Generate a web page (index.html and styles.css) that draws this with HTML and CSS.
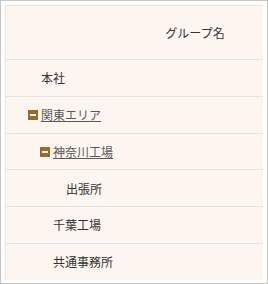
FILE: index.html
```html
<!DOCTYPE html>
<html lang="ja">
<head>
    <meta charset="UTF-8">
    <title>グループ</title>
    <link rel="stylesheet" href="styles.css">
</head>
<body>
    <div class="frame">
        <div class="scroller">
            <table class="group-table">
                <thead>
                    <tr><th>グループ名</th></tr>
                </thead>
                <tbody>
                    <tr><td class="lv0"><span class="name">本社</span></td></tr>
                    <tr><td class="lv0"><span class="name"><span class="toggle"></span><a href="#">関東エリア</a></span></td></tr>
                    <tr><td class="lv1"><span class="name"><span class="toggle"></span><a href="#">神奈川工場</a></span></td></tr>
                    <tr><td class="lv2"><span class="name">出張所</span></td></tr>
                    <tr><td class="lv1"><span class="name">千葉工場</span></td></tr>
                    <tr><td class="lv1"><span class="name">共通事務所</span></td></tr>
                    <tr><td class="lv1"><span class="name">&nbsp;</span></td></tr>
                </tbody>
            </table>
        </div>
    </div>
</body>
</html>
```

FILE: styles.css
```css
html, body {
    margin: 0;
    padding: 0;
    background: #ffffff;
}
body {
    font-family: "Noto Sans CJK JP", "Noto Sans", sans-serif;
    font-size: 12px;
    color: #333333;
}
.frame {
    box-sizing: border-box;
    width: 268px;
    height: 284px;
    border: 1px solid #c6c6c6;
    padding: 4px;
}
.scroller {
    height: 275px;
    overflow: hidden;
}
.group-table {
    width: 380px;
    border-collapse: collapse;
    background: #fdf5ef;
    border: 1px solid #e3e3e3;
}
.group-table th {
    height: 53px;
    padding: 0;
    font-weight: normal;
    text-align: center;
    border-bottom: 1px solid #e3e3e3;
}
.group-table td {
    height: 35.75px;
    padding: 0;
    text-align: left;
    border-bottom: 1px solid #e3e3e3;
}
.lv0 { padding-left: 35px !important; }
.lv1 { padding-left: 47px !important; }
.lv2 { padding-left: 60px !important; }
.name {
    display: inline-flex;
    align-items: center;
}
.name a {
    color: #5a5a5a;
    text-decoration: underline;
}
.toggle {
    position: relative;
    width: 10px;
    height: 10px;
    margin-left: -13px;
    margin-right: 3px;
    background: #9c6a28;
}
.toggle::after {
    content: "";
    position: absolute;
    left: 2px;
    right: 2px;
    top: 4px;
    height: 2px;
    background: #ffffff;
}
```
